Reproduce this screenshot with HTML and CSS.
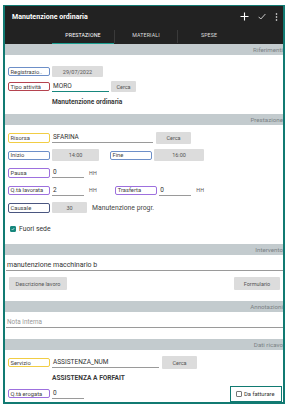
FILE: index.html
```html
<!DOCTYPE html>
<html>
<head>
<meta charset="utf-8">
<link rel="stylesheet" href="styles.css">
</head>
<body>
<div class="frame">
  <header class="appbar">
    <div class="titlerow">
      <span class="title">Manutenzione ordinaria</span>
      <div class="actions">
        <svg class="ic-plus" width="9" height="9" viewBox="0 0 9 9"><path d="M4.5 0.5v8M0.5 4.5h8" stroke="#fff" stroke-width="1.1"/></svg>
        <svg class="ic-check" width="8" height="7" viewBox="0 0 8 7"><path d="M0.6 3.8l2.2 2.2l4.6-5" stroke="#ddd" stroke-width="0.9" fill="none"/></svg>
        <svg class="ic-more" width="3" height="8" viewBox="0 0 3 8"><circle cx="1.5" cy="1" r="0.8" fill="#fff"/><circle cx="1.5" cy="4" r="0.8" fill="#fff"/><circle cx="1.5" cy="7" r="0.8" fill="#fff"/></svg>
      </div>
    </div>
    <nav class="tabs">
      <span class="tab active">PRESTAZIONE</span>
      <span class="sep"></span>
      <span class="tab">MATERIALI</span>
      <span class="sep"></span>
      <span class="tab">SPESE</span>
    </nav>
  </header>

  <div class="section">Riferimenti</div>
  <div class="body b-rif">
    <div class="row">
      <span class="lbl c-blue">Registrazio..</span>
      <span class="btn w-date">29/07/2022</span>
    </div>
    <div class="row">
      <span class="lbl c-red">Tipo attività</span>
      <span class="inp focus w-moro">MORO</span>
      <span class="btn w-cerca1">Cerca</span>
    </div>
    <div class="row">
      <span class="lbl ghost"></span>
      <span class="bold">Manutenzione ordinaria</span>
    </div>
  </div>

  <div class="section">Prestazione</div>
  <div class="body b-pre">
    <div class="row r18">
      <span class="lbl c-yellow">Risorsa</span>
      <span class="inp w-sfarina">SFARINA</span>
      <span class="btn w-cerca2">Cerca</span>
    </div>
    <div class="row r18">
      <span class="lbl c-blue">Inizio</span>
      <span class="btn w-time">14:00</span>
      <span class="lbl c-blue w-fine">Fine</span>
      <span class="btn w-time2">16:00</span>
    </div>
    <div class="row r18">
      <span class="lbl c-purple">Pausa</span>
      <span class="inp w-num">0</span>
      <span class="unit">HH</span>
    </div>
    <div class="row r18">
      <span class="lbl c-purple">Q.tà lavorata</span>
      <span class="inp w-num">2</span>
      <span class="unit">HH</span>
      <span class="lbl c-purple w-tras">Trasferta</span>
      <span class="inp w-num2">0</span>
      <span class="unit">HH</span>
    </div>
    <div class="row r18">
      <span class="lbl c-navy">Causale</span>
      <span class="btn w-caus">30</span>
      <span class="plain">Manutenzione progr.</span>
    </div>
    <div class="row r24">
      <span class="chk on"><svg width="6" height="6" viewBox="0 0 6 6"><path d="M1 3.1l1.4 1.4l2.6-3" stroke="#fff" stroke-width="0.9" fill="none"/></svg></span>
      <span class="plain dark">Fuori sede</span>
    </div>
  </div>

  <div class="section">Intervento</div>
  <div class="body b-int">
    <div class="inp full">manutenzione macchinario b</div>
    <div class="btnrow">
      <span class="btn w-desc">Descrizione lavoro</span>
      <span class="btn w-form">Formulario</span>
    </div>
  </div>

  <div class="section">Annotazioni</div>
  <div class="body b-ann">
    <div class="inp full ph">Nota interna</div>
  </div>

  <div class="section">Dati ricavo</div>
  <div class="body b-dati">
    <div class="row r15">
      <span class="lbl c-yellow">Servizio</span>
      <span class="inp w-serv">ASSISTENZA_NUM</span>
      <span class="btn w-cerca3">Cerca</span>
    </div>
    <div class="row r15">
      <span class="lbl ghost"></span>
      <span class="bold">ASSISTENZA A FORFAIT</span>
    </div>
    <div class="row r16">
      <span class="lbl c-purple">Q.tà erogata</span>
      <span class="inp w-num">0</span>
      <span class="fatt"><span class="chk"></span><span class="plain dark">Da fatturare</span></span>
    </div>
  </div>
</div>
</body>
</html>
```
FILE: styles.css
```css
* { box-sizing: border-box; }
html, body { margin: 0; padding: 0; background: #fff; }
body {
  font-family: Roboto, "Liberation Sans", sans-serif;
  color: #222;
  font-size: 6px;
}
.frame {
  margin: 5px 0 0 3px;
  width: 282px;
  height: 399px;
  border: 2px solid #117a72;
  border-top-width: 1px;
  background: #fff;
  display: flex;
  flex-direction: column;
  overflow: hidden;
}
.appbar { background: #222; color: #fff; }
.titlerow {
  height: 21px;
  display: flex;
  align-items: center;
  justify-content: space-between;
  padding: 0 5px 0 7px;
}
.title { font-weight: 700; font-size: 7px; letter-spacing: 0.05px; }
.actions { display: flex; align-items: center; gap: 9px; }
.tabs {
  height: 17px;
  display: flex;
  align-items: stretch;
  padding-left: 47px;
}
.tab {
  width: 62px;
  display: flex;
  align-items: center;
  justify-content: center;
  font-size: 5.3px;
  color: #ddd;
  letter-spacing: 0.1px;
  border-bottom: 1.5px solid transparent;
}
.tab.active { border-bottom-color: #1a9e90; color: #fff; }
.sep { width: 1px; background: #3a3a3a; margin: 3px 0 1px; }
.section {
  background: #c3cbce;
  height: 11px;
  font-size: 6.2px;
  color: #7b8285;
  display: flex;
  align-items: center;
  justify-content: flex-end;
  flex: none;
}
.body { padding: 0 2px 0 3px; }
.b-rif { padding-top: 9px; height: 59px; }
.b-pre { padding-top: 4px; height: 119px; }
.b-int { padding: 5px 2px 0 1px; height: 46px; }
.b-ann { padding: 5px 2px 0 1px; height: 27px; }
.b-dati { padding-top: 5px; flex: 1; }
.row { display: flex; align-items: center; height: 15px; }
.r18 { height: 17.5px; }
.r24 { height: 24px; }
.r15 { height: 15px; }
.r16 { height: 17px; }
.lbl {
  width: 42px;
  height: 9.5px;
  border: 1px solid #6d8fc8;
  border-radius: 2px;
  font-size: 5.8px;
  color: #444;
  display: flex;
  align-items: center;
  padding-left: 1.5px;
  white-space: nowrap;
  overflow: hidden;
  flex: none;
}
.lbl.ghost { border-color: transparent; }
.c-blue { border-color: #6d8fc8; }
.c-red { border-color: #b5434f; }
.c-yellow { border-color: #f1cd44; }
.c-purple { border-color: #9d70de; }
.c-navy { border-color: #4a5680; }
.btn {
  background: #dcdcdc;
  height: 11px;
  font-size: 5.5px;
  color: #555;
  display: flex;
  align-items: center;
  justify-content: center;
  flex: none;
  border-radius: 1px;
}
.inp {
  height: 11px;
  border-bottom: 0.8px solid #9a9a9a;
  display: flex;
  align-items: center;
  font-size: 6.5px;
  color: #333;
  padding-left: 1px;
  flex: none;
  white-space: nowrap;
}
.inp.focus { border-bottom: 1px solid #17877d; }
.bold { font-weight: 700; font-size: 6.6px; margin-left: 2px; color: #3a3a3a; }
.plain { font-size: 6.8px; color: #444; }
.plain.dark { color: #333; }
.unit { font-size: 5.3px; color: #555; margin-left: 5px; letter-spacing: 0.3px; }
.w-date { width: 51px; margin-left: 2px; }
.w-moro { width: 57px; margin-left: 2px; }
.w-cerca1 { width: 25px; margin-left: 2px; }
.w-sfarina { width: 101px; margin-left: 2px; }
.w-cerca2 { width: 35px; margin-left: 3px; height: 12px; }
.w-time { width: 47px; margin-left: 2px; height: 12px; }
.w-fine { margin-left: 11px; }
.w-time2 { width: 50px; margin-left: 2px; height: 12px; }
.w-num { width: 32px; margin-left: 2px; }
.w-tras { margin-left: 18px; }
.w-num2 { width: 32px; margin-left: 2px; }
.w-caus { width: 35px; margin-left: 2px; height: 11px; }
.w-caus + .plain { margin-left: 5px; }
.chk {
  width: 6px; height: 6px;
  border: 0.8px solid #777;
  border-radius: 1px;
  display: inline-flex;
  align-items: center;
  justify-content: center;
  margin-left: 2px;
  margin-right: 3px;
  flex: none;
}
.chk.on { background: #17877d; border-color: #17877d; }
.full { width: 277px; height: 11px; font-size: 7px; }
.ph { color: #999; font-size: 6.4px; }
.btnrow { display: flex; justify-content: space-between; margin-top: 6px; padding: 0 1px 0 3px; }
.w-desc { width: 58px; height: 13px; }
.w-form { width: 46px; height: 13px; }
.w-serv { width: 107px; margin-left: 2px; }
.w-cerca3 { width: 35px; margin-left: 3px; height: 13px; }
.fatt {
  margin-left: auto;
  margin-right: -1px;
  width: 52px;
  height: 16px;
  border: 1.5px solid #117a72;
  display: flex;
  align-items: center;
}
.fatt .chk { margin-left: 5px; margin-right: 2px; }
.fatt .plain { font-size: 5.8px; }
```
